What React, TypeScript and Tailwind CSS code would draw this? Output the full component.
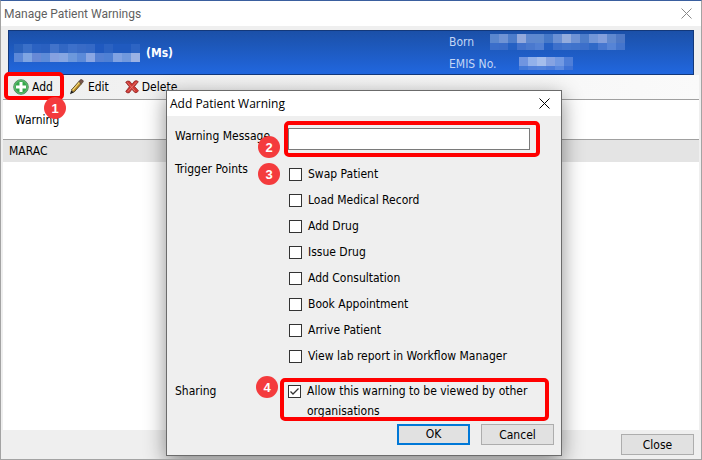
import type { ReactNode } from 'react';

type MosaicProps = { rows: string[][]; heights: number[]; className?: string };

// Pixelated block that hides the patient's details
const Mosaic = ({ rows, heights, className }: MosaicProps) => {
  const width = rows[0].length * 9;
  const height = heights.reduce((a, b) => a + b, 0);
  return (
    <svg width={width} height={height} className={className} shapeRendering="crispEdges" aria-hidden="true">
      {rows.map((row, r) =>
        row.map((fill, c) => (
          <rect key={`${r}-${c}`} x={c * 9} y={r === 0 ? 0 : heights[0]} width={9} height={heights[r]} fill={fill} />
        ))
      )}
    </svg>
  );
};

const NAME = [
  ['#2a62bd', '#3b70c8', '#2b62c2', '#2a60c0', '#4273ca', '#3267c3', '#3d70ca', '#396bc6', '#3569c6', '#2059bf', '#2b62c2', '#205abf', '#205abf', '#2d64c3'],
  ['#5b88d8', '#7fa5e2', '#6789d6', '#5d8bd8', '#86a1e0', '#86a6e2', '#6c98dc', '#5b8ad9', '#8aa6e3', '#5480d4', '#4f80d4', '#80a2e2', '#7199dd', '#9bb2e4'],
];

const BORN = [
  ['#5a87cf', '#6f93d5', '#4c7ccb', '#93a9dc', '#5e88d0', '#5d89cf', '#4578c8', '#6a90d4', '#93acdd', '#6f93d5', '#4d7dca', '#7296d8', '#839fdc', '#5f88cf', '#4d78c6'],
  ['#3b6eca', '#3a6cc9', '#2560c3', '#4272cc', '#4a79ce', '#5280d3', '#2560c4', '#3d70cb', '#4275cd', '#4073cb', '#3c6fca', '#3069c7', '#4677d0', '#5684d6', '#4475cd'],
];

const EMIS = [
  ['#7095e0', '#92b1ea', '#a4bdec', '#86a3e2', '#7299e2', '#4e7ed8'],
  ['#4379d8', '#5080db', '#5283dc', '#4b7cda', '#5b89df', '#3d72d6'],
];

const TRIGGERS = [
  'Swap Patient',
  'Load Medical Record',
  'Add Drug',
  'Issue Drug',
  'Add Consultation',
  'Book Appointment',
  'Arrive Patient',
  'View lab report in Workflow Manager',
];

const CloseIcon = () => (
  <svg width="11" height="11" viewBox="0 0 11 11" fill="none" stroke="currentColor" aria-hidden="true">
    <path d="M.5.5l10 10M10.5.5l-10 10" />
  </svg>
);

const AddIcon = () => (
  <svg width="16" height="16" viewBox="0 0 16 16" aria-hidden="true">
    <circle cx="8" cy="8" r="7.3" fill="#35a64b" stroke="#5d8f68" />
    <circle cx="8" cy="8" r="6.3" fill="none" stroke="#7acb87" strokeWidth=".7" />
    <path d="M6.5 3h3v3.500h3.500v3h-3.500v3.500h-3v-3.500h-3.500v-3h3.500z" fill="#fff" />
  </svg>
);

const EditIcon = () => (
  <svg width="16" height="16" viewBox="0 0 16 16" aria-hidden="true">
    <path d="M1 15.300l1.200-4 2.600 2.200z" fill="#1d1d1d" />
    <path d="M2.400 11L9.800 2.600l2.700 2.200-7.600 8.500z" fill="#b98a24" stroke="#3e3012" strokeWidth=".8" />
    <path d="M3.500 11.300l7.200-8.200" stroke="#f4da7c" strokeWidth="1.200" />
    <path d="M9.800 2.600L11.600.6q1-.3 1.900.4t.8 1.800l-1.800 2z" fill="#7a564e" stroke="#3b2c28" strokeWidth=".6" />
  </svg>
);

const DeleteIcon = () => (
  <svg width="14" height="14" viewBox="0 0 14 14" aria-hidden="true">
    <path
      d="M.7 2.200Q2.600.4 4.700 1.300L7 4.200 9.700 1q2.100-1 3.600.7L9.500 6.400l3.900 4.300q-.8 2.200-3.400 2L6.900 9.300l-2.700 3.500q-2.500.6-3.500-1.300L4.400 6.800z"
      fill="#cf3833"
      stroke="#8b2323"
      strokeWidth=".8"
    />
    <path d="M2.300 2.300l7.900 9M11.400 2.100L2.800 11.500" stroke="#e98078" strokeWidth=".8" />
  </svg>
);

const Step = ({ children, className }: { children: ReactNode; className: string }) => (
  <span
    className={`absolute z-10 flex size-[22px] items-center justify-center rounded-full bg-[#f43b3d] font-['Liberation_Sans',sans-serif] text-[13px] font-bold leading-none text-white ${className}`}
  >
    {children}
  </span>
);

const Highlight = ({ className }: { className: string }) => (
  <span className={`pointer-events-none absolute rounded-[5px] border-4 border-[#ff0000] ${className}`} />
);

const WarningDialog = () => (
  <section
    role="dialog"
    aria-label="Add Patient Warning"
    className="absolute left-[165px] top-[89px] w-[396px] border border-[#6b6b6b] bg-[#efefef] shadow-[0_6px_20px_rgba(0,0,0,0.45)]"
  >
    <header className="flex h-[25px] items-center justify-between bg-white pl-[3px] pr-[11px] font-['Open_Sans',sans-serif]">
      <h2>Add Patient Warning</h2>
      <button type="button" aria-label="Close dialog" className="text-black">
        <CloseIcon />
      </button>
    </header>

    <form className="pb-[10px] pl-2 pr-[7px] pt-3">
      <div className="relative flex">
        <label htmlFor="message" className="w-[113px] leading-4">
          Warning Message
        </label>
        <input id="message" type="text" className="h-[22px] w-[242px] border border-[#7a7a7a] bg-white px-1 outline-none" />
        <Highlight className="-top-[7px] left-[109px] h-9 w-64" />
        <Step className="left-[83px] top-2">2</Step>
      </div>

      <fieldset className="relative mt-[11px] flex">
        <legend className="float-left w-[114px] leading-4">Trigger Points</legend>
        <div className="flex flex-col">
          {TRIGGERS.map((name) => (
            <label key={name} className="flex h-[26px] items-center gap-[6px]">
              <input type="checkbox" className="size-[13px] appearance-none border border-[#333] bg-white" />
              {name}
            </label>
          ))}
        </div>
        <Step className="left-[83px] top-[2px]">3</Step>
      </fieldset>

      <div className="relative mt-3 flex">
        <span className="w-[113px] leading-5">Sharing</span>
        <label className="flex w-[250px] items-start gap-[6px] leading-5">
          <span className="relative mt-1 size-[13px] shrink-0">
            <input type="checkbox" defaultChecked className="peer block size-[13px] appearance-none border border-[#333] bg-white" />
            <svg viewBox="0 0 13 13" fill="none" stroke="#333" className="pointer-events-none absolute inset-0 hidden peer-checked:block">
              <path d="M2.500 6.500L5 9l5.500-5.500" strokeWidth="1.300" />
            </svg>
          </span>
          Allow this warning to be viewed by other organisations
        </label>
        <Highlight className="-top-[3px] left-[105px] h-[43px] w-[269px]" />
        <Step className="-top-[5px] left-[81px]">4</Step>
      </div>

      <div className="mt-[3px] flex justify-end gap-[11px]">
        <button type="button" className="h-[21px] w-[73px] border-2 border-[#0078d7] bg-[#e1e1e1] leading-[17px]">
          OK
        </button>
        <button type="button" className="h-[21px] w-[73px] border border-[#adadad] bg-[#e1e1e1]">
          Cancel
        </button>
      </div>
    </form>
  </section>
);

export default function App() {
  return (
    <main className="relative flex min-h-screen flex-col overflow-hidden border border-[#a3a3a3] border-t-[#3a5f9f] bg-[#efefef] font-['DejaVu_Sans_Condensed','Noto_Sans',sans-serif] text-[12px] leading-4 text-black">
      <header className="flex h-[25px] items-center justify-between bg-white pl-[3px] pr-[9px] font-['Roboto',sans-serif] text-[#5f5f5f]">
        <h1>Manage Patient Warnings</h1>
        <button type="button" aria-label="Close window" className="text-[#888]">
          <CloseIcon />
        </button>
      </header>

      <div className="mx-[7px] mt-1 flex h-[45px] items-center border border-[#13387a] bg-linear-to-b from-[#1b50a8] to-[#2167df] pl-[5px] text-[#c3d6f5]">
        <Mosaic rows={NAME} heights={[9, 9]} />
        <span className="ml-[6px] flex-1 font-bold text-white">(Ms)</span>
        <dl className="w-[244px] leading-[22px]">
          <div className="flex items-center">
            <dt className="w-[41px]">Born</dt>
            <dd><Mosaic rows={BORN} heights={[9, 7]} /></dd>
          </div>
          <div className="flex items-center">
            <dt className="w-[70px]">EMIS No.</dt>
            <dd><Mosaic rows={EMIS} heights={[9, 4]} /></dd>
          </div>
        </dl>
      </div>

      <nav className="relative mx-[2px] flex h-6 items-center gap-4 bg-linear-to-r from-[#efefef] to-[#fafafa] pl-[10px]">
        <button type="button" className="flex items-center gap-[3px]"><AddIcon />Add</button>
        <button type="button" className="flex items-center gap-[3px]"><EditIcon />Edit</button>
        <button type="button" className="flex items-center gap-[3px]"><DeleteIcon />Delete</button>
        <Highlight className="-top-[3px] left-[1px] h-7 w-[60px]" />
        <Step className="left-[41px] top-[22px]">1</Step>
      </nav>

      <table className="mx-[2px] border-collapse text-left">
        <thead>
          <tr className="h-10 border-y border-[#a0a0a0] bg-white">
            <th className="pl-3 font-normal">Warning</th>
          </tr>
        </thead>
        <tbody>
          <tr className="h-[22px] bg-[#e4e4e4]">
            <td className="pl-[6px]">MARAC</td>
          </tr>
        </tbody>
      </table>
      <div className="mx-[2px] flex-1 bg-white" />

      <footer className="flex h-[29px] items-start justify-end pr-[7px] pt-1">
        <button type="button" className="h-[21px] w-[73px] border border-[#adadad] bg-[#e1e1e1]">
          Close
        </button>
      </footer>

      <WarningDialog />
    </main>
  );
}
